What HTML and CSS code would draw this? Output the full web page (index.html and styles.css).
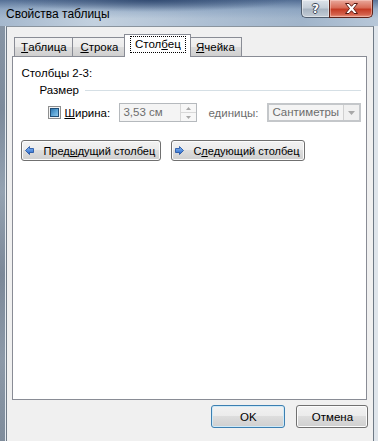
FILE: index.html
```html
<!DOCTYPE html>
<html lang="ru">
<head>
    <meta charset="UTF-8">
    <title>Свойства таблицы</title>
    <link rel="stylesheet" href="styles.css">
</head>
<body>
    <div class="window">
        <div class="titlebar">
            <span class="title">Свойства таблицы</span>
            <div class="caption-buttons">
                <span class="cap-help">?</span>
                <span class="cap-close">
                    <svg width="15" height="11" viewBox="0 0 15 11">
                        <path d="M1.5 0.5 L5 0.5 L7.5 3.3 L10 0.5 L13.5 0.5 L9.5 5.5 L13.5 10.5 L10 10.5 L7.5 7.7 L5 10.5 L1.5 10.5 L5.5 5.5 Z" fill="#ffffff" stroke="#5a1a12" stroke-width="1"/>
                    </svg>
                </span>
            </div>
        </div>
        <div class="frame">
            <div class="frame-left"></div>
            <div class="client">
                <div class="tabs">
                    <div class="tab tab-table"><u>Т</u>аблица</div>
                    <div class="tab tab-row"><u>С</u>трока</div>
                    <div class="tab tab-col active"><span class="focus">Стол<u>б</u>ец</span></div>
                    <div class="tab tab-cell"><u>Я</u>чейка</div>
                </div>
                <div class="panel">
                    <div class="caption">Столбцы 2-3:</div>
                    <div class="group-head">
                        <span>Размер</span>
                        <span class="rule"></span>
                    </div>
                    <div class="size-row">
                        <span class="checkbox"><span class="mark"></span></span>
                        <span class="label-width"><u>Ш</u>ирина:</span>
                        <span class="spin-input">
                            <span class="value">3,53 см</span>
                            <span class="spin">
                                <span class="spin-btn"><svg width="5" height="3" viewBox="0 0 5 3"><path d="M0 3 L2.5 0 L5 3 Z" fill="#a8a8a8"/></svg></span>
                                <span class="spin-btn"><svg width="5" height="3" viewBox="0 0 5 3"><path d="M0 0 L2.5 3 L5 0 Z" fill="#a8a8a8"/></svg></span>
                            </span>
                        </span>
                        <span class="label-units">единицы:</span>
                        <span class="combo">
                            <span class="value">Сантиметры</span>
                            <span class="drop"><svg width="7" height="4" viewBox="0 0 7 4"><path d="M0 0 L7 0 L3.5 4 Z" fill="#a8a8a8"/></svg></span>
                        </span>
                    </div>
                    <div class="nav-row">
                        <button class="btn btn-prev">
                            <svg width="9" height="9" viewBox="0 0 9 9">
                                <defs>
                                    <linearGradient id="ga" x1="0" y1="0" x2="0" y2="1">
                                        <stop offset="0" stop-color="#8fc0f5"/>
                                        <stop offset="1" stop-color="#2060c8"/>
                                    </linearGradient>
                                </defs>
                                <path d="M0.5 4.5 L4.5 0.5 L4.5 2.5 L8.5 2.5 L8.5 6.5 L4.5 6.5 L4.5 8.5 Z" fill="url(#ga)" stroke="#1b4d9e" stroke-width="0.8"/>
                            </svg>
                            <span>Пред<u>ы</u>дущий столбец</span>
                        </button>
                        <button class="btn btn-next">
                            <svg width="9" height="9" viewBox="0 0 9 9">
                                <path d="M8.5 4.5 L4.5 0.5 L4.5 2.5 L0.5 2.5 L0.5 6.5 L4.5 6.5 L4.5 8.5 Z" fill="url(#ga)" stroke="#1b4d9e" stroke-width="0.8"/>
                            </svg>
                            <span>С<u>л</u>едующий столбец</span>
                        </button>
                    </div>
                </div>
                <div class="footer">
                    <button class="btn btn-ok">OK</button>
                    <button class="btn btn-cancel">Отмена</button>
                </div>
            </div>
            <div class="frame-right"></div>
        </div>
    </div>
</body>
</html>
```

FILE: styles.css
```css
body {
    margin: 0;
    overflow: hidden;
    background-color: #f0f0f0;
    font-family: "Liberation Sans", Arial, sans-serif;
    font-size: 11.5px;
    color: #000000;
}

u {
    text-decoration: underline;
    text-underline-offset: 1px;
}

.window {
    width: 378px;
    height: 441px;
    display: flex;
    flex-direction: column;
    background: linear-gradient(90deg, #8d9bab 0%, #9fb0c2 40%, #b8c7d6 100%);
}

/* title bar */
.titlebar {
    height: 26px;
    display: flex;
    justify-content: space-between;
    align-items: flex-start;
    background:
        radial-gradient(ellipse 140px 12px at 150px 0px, rgba(30, 55, 95, 0.65), rgba(30, 55, 95, 0)),
        linear-gradient(180deg, rgba(50, 80, 125, 0.7) 0%, rgba(110, 140, 178, 0.4) 35%, rgba(200, 215, 230, 0) 72%),
        linear-gradient(90deg, #a5b8cd 0%, #c3d1df 25%, #adbfd3 55%, #a0b4ca 80%, #b7c7d8 100%);
}

.title {
    padding: 7px 0 0 6px;
    font-size: 12px;
    line-height: 15px;
    color: #000000;
}

.caption-buttons {
    display: flex;
    margin-right: 5px;
}

.cap-help,
.cap-close {
    height: 18px;
    box-sizing: border-box;
    display: flex;
    align-items: center;
    justify-content: center;
    border: 1px solid #4f5d6e;
    border-top: none;
}

.cap-help {
    width: 28px;
    border-right: none;
    border-radius: 0 0 0 5px;
    background: linear-gradient(180deg, #dde3ea 0%, #c5ced8 45%, #a9b5c2 55%, #c3ccd6 100%);
    box-shadow: inset 0 0 0 1px rgba(255, 255, 255, 0.45);
    color: #ffffff;
    font-family: "DejaVu Sans", sans-serif;
    font-weight: bold;
    font-size: 12px;
    text-shadow: 1px 0 0 #3d4a5a, -1px 0 0 #3d4a5a, 0 1px 0 #3d4a5a, 0 -1px 0 #3d4a5a;
}

.cap-close {
    width: 44px;
    border-radius: 0 0 5px 0;
    border-color: #5e2219;
    background: linear-gradient(180deg, #e9a99c 0%, #d86c57 45%, #c43b24 55%, #d4614b 85%, #e79a86 100%);
    box-shadow: inset 0 0 0 1px rgba(255, 220, 210, 0.45);
}

/* frame around client area */
.frame {
    flex: 1;
    display: flex;
}

.frame-left {
    width: 6px;
    border-right: 1px solid #e4eaf0;
    background: linear-gradient(180deg, #8795a5 0%, #7c8a9b 20%, #94a2b1 40%, #7b8898 60%, #8c99a8 80%, #7f8c9b 100%);
}

.frame-right {
    width: 4px;
    background: #dfe5eb;
}

.client {
    flex: 1;
    display: flex;
    flex-direction: column;
    background-color: #f0f0f0;
    border-top: 1px solid #8a949e;
    border-left: 1px solid #6f7a86;
    border-right: 1px solid #6f7a86;
    padding: 7px 6px 0 5px;
}

/* tabs */
.tabs {
    height: 22px;
    display: flex;
    align-items: flex-end;
    padding-left: 2px;
}

.tab {
    height: 19px;
    box-sizing: border-box;
    display: flex;
    align-items: center;
    justify-content: center;
    border: 1px solid #898c95;
    border-bottom: none;
    background: linear-gradient(180deg, #f2f2f2 0%, #ebebeb 49%, #dddddd 50%, #cfcfcf 100%);
    line-height: 15px;
    white-space: nowrap;
}

.tab + .tab {
    margin-left: -1px;
}

.tab-table { width: 59px; }
.tab-row { width: 54px; }
.tab-cell { width: 54px; }

.tab.active {
    width: 67px;
    height: 23px;
    margin: 0 -2px -1px -2px;
    position: relative;
    z-index: 1;
    background: #ffffff;
    align-items: flex-start;
    padding-top: 2px;
}

.tab.active + .tab {
    margin-left: -1px;
}

.focus {
    outline: 1px dotted #000000;
    padding: 0 4px;
    line-height: 15px;
}

/* panel */
.panel {
    height: 344px;
    box-sizing: border-box;
    border: 1px solid #898c95;
    background: #ffffff;
    padding: 9px 5px 0 8px;
}

.caption {
    line-height: 15px;
}

.group-head {
    display: flex;
    align-items: center;
    margin: 2px 0 0 18px;
    line-height: 15px;
}

.rule {
    flex: 1;
    height: 1px;
    margin-left: 6px;
    background: #d5dfe5;
}

.size-row {
    display: flex;
    align-items: center;
    height: 19px;
    margin: 5px 0 0 27px;
    white-space: nowrap;
}

.checkbox {
    width: 13px;
    height: 13px;
    box-sizing: border-box;
    border: 1px solid #8e8f8f;
    background: #f4f4f4;
    padding: 1px;
}

.mark {
    display: block;
    width: 9px;
    height: 9px;
    box-sizing: border-box;
    border: 1px solid #1f4f78;
    background: linear-gradient(135deg, #2f77b0 0%, #5aa2d4 50%, #8cc9ec 100%);
}

.label-width {
    width: 55px;
    margin-left: 3px;
}

.spin-input,
.combo {
    height: 19px;
    box-sizing: border-box;
    display: flex;
    border: 1px solid #b5b9bd;
    background: #f4f4f4;
    color: #6d6d6d;
}

.spin-input {
    width: 78px;
}

.value {
    flex: 1;
    padding-left: 3px;
    line-height: 17px;
    overflow: hidden;
}

.spin {
    width: 15px;
    display: flex;
    flex-direction: column;
    border-left: 1px solid #d8d8d8;
}

.spin-btn {
    flex: 1;
    display: flex;
    align-items: center;
    justify-content: center;
    background: #f7f7f7;
    border-bottom: 1px solid #d8d8d8;
}

.spin-btn:last-child {
    border-bottom: none;
}

.label-units {
    width: 59px;
    margin-left: 11px;
    color: #6d6d6d;
}

.combo {
    width: 94px;
    border: 2px solid #c4c7ca;
}

.combo .value {
    line-height: 15px;
}

.drop {
    width: 15px;
    display: flex;
    align-items: center;
    justify-content: center;
    border-left: 1px solid #d0d0d0;
    background: #f0f0f0;
}

.nav-row {
    display: flex;
    gap: 10px;
    margin-top: 18px;
}

/* buttons */
.btn {
    height: 21px;
    box-sizing: border-box;
    display: flex;
    align-items: center;
    justify-content: center;
    gap: 6px;
    padding: 0;
    border: 1px solid #707070;
    border-radius: 3px;
    background: linear-gradient(180deg, #f2f2f2 0%, #ebebeb 49%, #dddddd 50%, #cfcfcf 100%);
    box-shadow: inset 0 0 0 1px #fcfcfc;
    font-family: "Liberation Sans", Arial, sans-serif;
    font-size: 11.5px;
    color: #000000;
    white-space: nowrap;
}

.btn-prev,
.btn-next {
    justify-content: flex-start;
    padding-left: 3px;
    gap: 9px;
    font-size: 11px;
}

.btn-prev {
    width: 140px;
}

.btn-next {
    width: 134px;
}

.footer {
    display: flex;
    justify-content: flex-end;
    gap: 11px;
    padding-top: 5px;
    margin-right: -1px;
}

.btn-ok,
.btn-cancel {
    height: 23px;
}

.btn-ok {
    width: 74px;
    border-color: #3c7fb1;
    box-shadow: inset 0 0 0 1px #cfeaf8;
}

.btn-cancel {
    width: 72px;
}
```
